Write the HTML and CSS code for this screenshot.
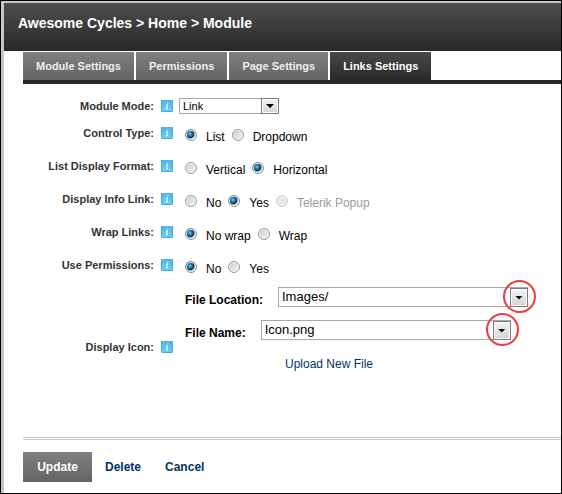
FILE: index.html
```html
<!DOCTYPE html>
<html lang="en">
<head>
<meta charset="utf-8">
<title>Awesome Cycles - Module</title>
<link rel="stylesheet" href="styles.css">
</head>
<body>
<svg class="defs" aria-hidden="true">
  <defs>
    <linearGradient id="tile" x1="0" y1="0" x2="0" y2="1">
      <stop offset="0" stop-color="#4fb4e6"/>
      <stop offset="1" stop-color="#6fd0f8"/>
    </linearGradient>
    <symbol id="info" viewBox="0 0 12 12">
      <rect width="12" height="12" rx="1" fill="url(#tile)"/>
      <path d="M0.5 0V11M11.5 0V11M1 11.5H11" stroke="#48a8dc" fill="none"/>
      <path d="M6.7 2.4V3.4M5 5H6.4L5.6 8.6H7" stroke="#fff" stroke-width="1.1" fill="none"/>
    </symbol>
  </defs>
</svg>
<div class="window">
  <header class="title"><h1>Awesome Cycles &gt; Home &gt; Module</h1></header>
  <main class="content">
    <nav class="tabs">
      <a href="#module">Module Settings</a>
      <a href="#permissions">Permissions</a>
      <a href="#page">Page Settings</a>
      <a href="#links" class="active" aria-current="page">Links Settings</a>
    </nav>
    <form class="settings">
      <div class="row compact">
        <label class="name" for="mode">Module Mode:</label>
        <svg class="info"><use href="#info"/></svg>
        <span class="combo small"><select id="mode"><option>Link</option></select><span class="arrow"></span></span>
      </div>
      <div class="row" role="radiogroup" aria-labelledby="control">
        <span class="name" id="control">Control Type:</span>
        <svg class="info"><use href="#info"/></svg>
        <div class="options">
          <label><input type="radio" name="control" checked><span>List</span></label>
          <label><input type="radio" name="control"><span>Dropdown</span></label>
        </div>
      </div>
      <div class="row" role="radiogroup" aria-labelledby="format">
        <span class="name" id="format">List Display Format:</span>
        <svg class="info"><use href="#info"/></svg>
        <div class="options">
          <label><input type="radio" name="format"><span>Vertical</span></label>
          <label><input type="radio" name="format" checked><span>Horizontal</span></label>
        </div>
      </div>
      <div class="row" role="radiogroup" aria-labelledby="infolink">
        <span class="name" id="infolink">Display Info Link:</span>
        <svg class="info"><use href="#info"/></svg>
        <div class="options">
          <label><input type="radio" name="infolink"><span>No</span></label>
          <label><input type="radio" name="infolink" checked><span>Yes</span></label>
          <label class="off"><input type="radio" name="infolink" disabled><span>Telerik Popup</span></label>
        </div>
      </div>
      <div class="row" role="radiogroup" aria-labelledby="wrap">
        <span class="name" id="wrap">Wrap Links:</span>
        <svg class="info"><use href="#info"/></svg>
        <div class="options">
          <label><input type="radio" name="wrap" checked><span>No wrap</span></label>
          <label><input type="radio" name="wrap"><span>Wrap</span></label>
        </div>
      </div>
      <div class="row" role="radiogroup" aria-labelledby="perms">
        <span class="name" id="perms">Use Permissions:</span>
        <svg class="info"><use href="#info"/></svg>
        <div class="options">
          <label><input type="radio" name="perms" checked><span>No</span></label>
          <label><input type="radio" name="perms"><span>Yes</span></label>
        </div>
      </div>
      <div class="row files" role="group" aria-labelledby="icon">
        <span class="name" id="icon">Display Icon:</span>
        <svg class="info"><use href="#info"/></svg>
        <div class="picker">
          <div class="field">
            <label for="location">File Location:</label>
            <span class="combo"><select id="location"><option>Images/</option></select><span class="arrow"></span><span class="ring"></span></span>
          </div>
          <div class="field">
            <label for="file">File Name:</label>
            <span class="combo"><select id="file"><option>Icon.png</option></select><span class="arrow"></span><span class="ring"></span></span>
          </div>
          <a class="upload" href="#upload">Upload New File</a>
        </div>
      </div>
      <footer class="actions">
        <button type="submit">Update</button>
        <a href="#delete">Delete</a>
        <a href="#cancel">Cancel</a>
      </footer>
    </form>
  </main>
</div>
</body>
</html>
```
FILE: styles.css
```css
* { box-sizing: border-box; }

body {
  margin: 0;
  background: #fff;
  color: #000;
  font: 12px/18px "Liberation Sans", Arial, sans-serif;
}

a { color: #036; text-decoration: none; }

.defs { position: absolute; width: 0; height: 0; }

.window {
  min-height: 100vh;
  border: 1px solid #000;
  box-shadow: inset 3px 2px #cac4c7;
  padding: 2px 0 0 3px;
}

.title {
  padding: 10px 14px 18px;
  background: linear-gradient(#4e4e4e, #282828);
  color: #fff;
}

.title h1 { margin: 0; font-size: 14px; line-height: 20px; }

.content { padding: 1px 0 0 19px; }

.tabs {
  display: flex;
  gap: 2px;
  border-bottom: 4px solid #282828;
}

.tabs a {
  padding: 5px 13px;
  background: linear-gradient(#808080, #646464);
  color: #eee;
  font-size: 11px;
  font-weight: bold;
}

.tabs .active {
  background: linear-gradient(#4a4a4a, #282828);
  color: #fff;
}

.settings { padding-top: 13px; }

.row {
  display: flex;
  align-items: flex-start;
  min-height: 33px;
}

.compact { min-height: 27px; }

.name {
  width: 131px;
  color: #333;
  font-size: 11px;
  font-weight: bold;
  text-align: right;
}

.info {
  flex: none;
  width: 12px;
  height: 12px;
  margin: 3px 6px 0 7px;
}

.options { display: flex; gap: 7px; padding: 4px 0 0 6px; }

.options label { display: flex; gap: 9px; }

.options .off { color: #999; }

input[type="radio"] {
  appearance: none;
  width: 12px;
  height: 12px;
  margin: 1px 0 0;
  border: 1px solid #999;
  border-radius: 50%;
  background: linear-gradient(135deg, #c8c8c8, #f8f8f8);
  box-shadow: inset 0 0 0 1px #f4f4f4;
}

input[type="radio"]:checked {
  border-color: #8a8f94;
  background: radial-gradient(circle at 4px 4px, #6fd0f5 0, #1c7bb0 2px, #0c304c 4px, #dfe5ea 5px);
}

input[type="radio"]:disabled { border-color: #ccc; background: #e8e8e8; }

.combo {
  position: relative;
  display: block;
  width: 250px;
}

.combo select {
  appearance: none;
  display: block;
  width: 100%;
  height: 20px;
  padding: 0 20px 0 3px;
  border: 1px solid #a8a8ae;
  border-radius: 0;
  background: #fff;
  color: #000;
  font: 13px/18px "Liberation Sans", Arial, sans-serif;
}

.small { width: 100px; margin-top: 1px; }

.combo.small select { height: 16px; font-size: 11px; line-height: 14px; }

.arrow {
  position: absolute;
  top: 1px;
  right: 0;
  bottom: 0;
  width: 18px;
  border: 1px solid #777b80;
  background: linear-gradient(#f4f4f4, #d4d4d4);
  box-shadow: inset 0 0 0 1px #fff;
  pointer-events: none;
}

.small .arrow { top: 0; }

.arrow::after {
  content: "";
  position: absolute;
  inset: 0;
  width: 8px;
  height: 4px;
  margin: auto;
  background: #000;
  clip-path: polygon(0 0, 100% 0, 50% 100%);
}

.ring {
  position: absolute;
  top: -7px;
  right: -8px;
  width: 33px;
  height: 33px;
  border: 2px solid #f23a3f;
  border-radius: 50%;
  pointer-events: none;
}

.files { min-height: 148px; }

.files .name { margin-top: 49px; }

.files .info { margin-top: 52px; }

.picker { padding-left: 6px; }

.field {
  display: flex;
  align-items: flex-start;
  gap: 15px;
  height: 33px;
  margin-top: -2px;
  margin-bottom: 2px;
}

.field label { padding-top: 4px; font-weight: bold; }

.upload { display: block; margin: 0 0 0 100px; }

.actions {
  display: flex;
  align-items: center;
  border-top: 3px double #c8c8c8;
  padding-top: 12px;
}

.actions button {
  width: 69px;
  height: 30px;
  padding: 0;
  border: 0;
  background: linear-gradient(#808080, #646464);
  color: #fff;
  font: bold 12px/18px "Liberation Sans", Arial, sans-serif;
}

.actions a { margin-left: 13px; font-weight: bold; }

.actions a + a { margin-left: 24px; }
```
